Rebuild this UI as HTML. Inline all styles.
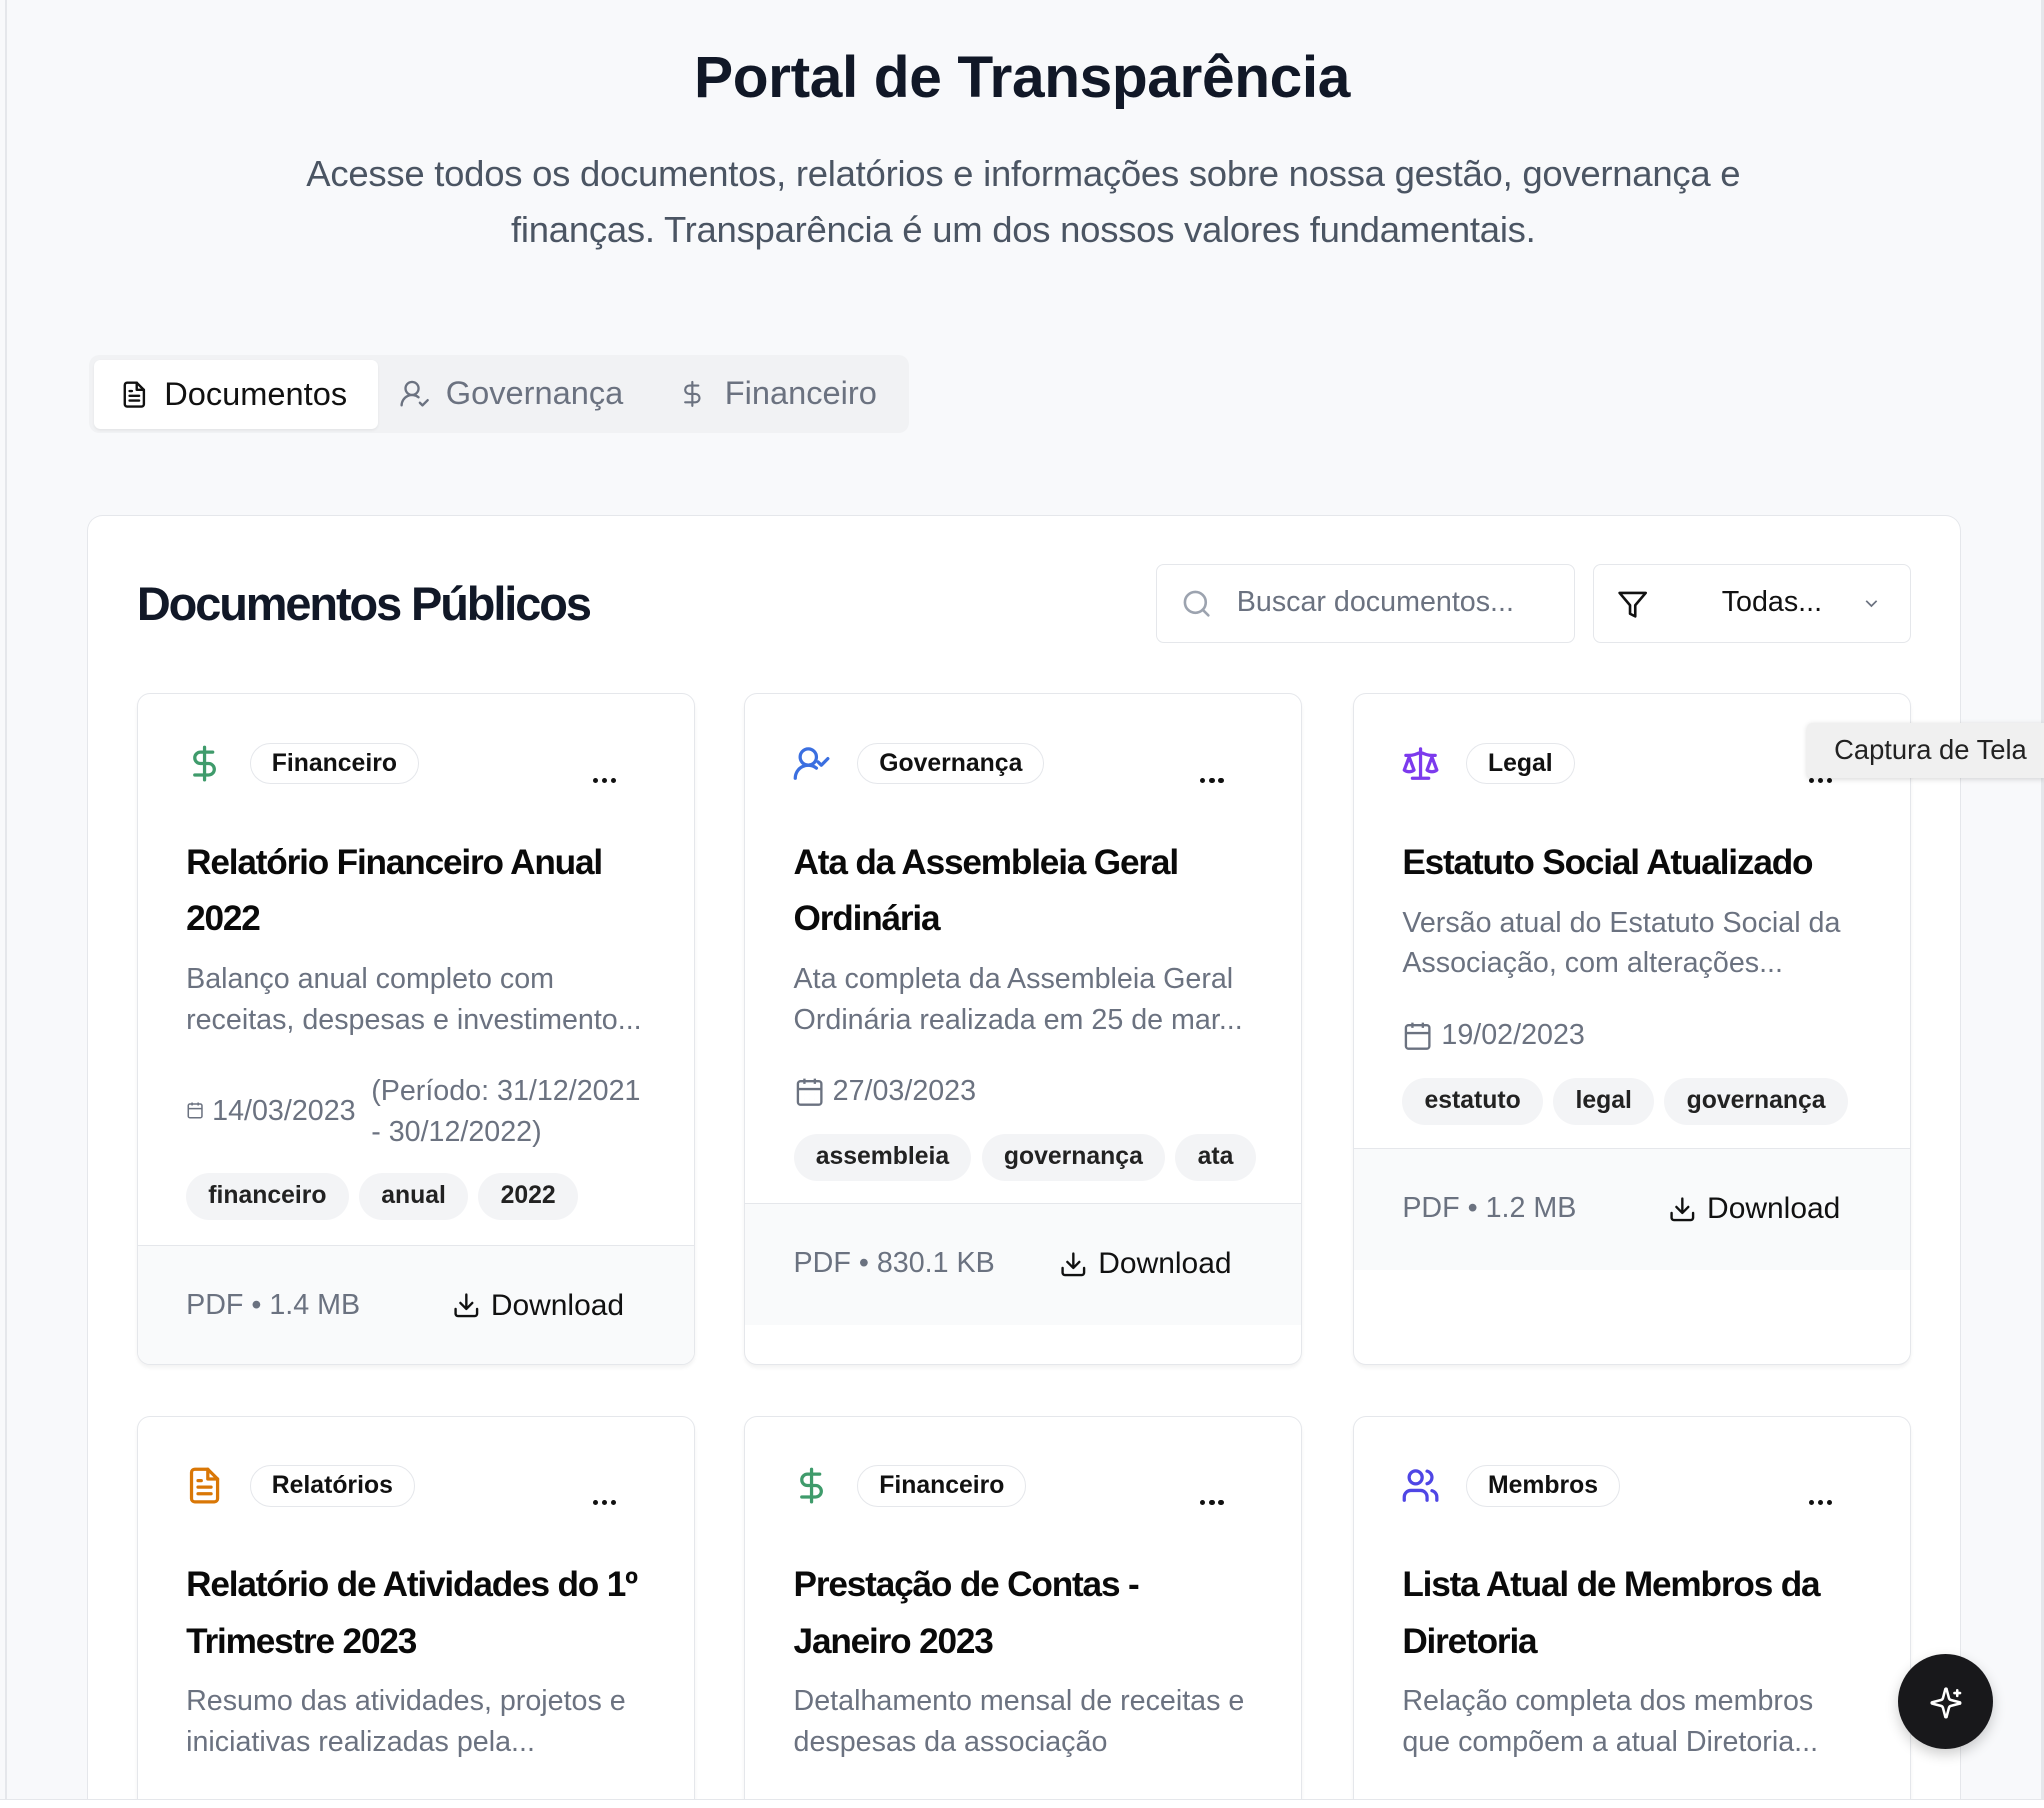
<!DOCTYPE html>
<html><head><meta charset="utf-8">
<style>
html,body{margin:0;padding:0;width:2044px;height:1808px;overflow:hidden;background:#f8f9fb;}
#w{width:1568px;height:1387px;zoom:1.30357;background:#f8f9fb;font-family:"Liberation Sans",Arial,sans-serif;color:#111827;position:relative;overflow:hidden;}
.abs{position:absolute;}
.nw{white-space:nowrap;}
h1{position:absolute;left:0;width:1568px;top:30px;margin:0;text-align:center;font-size:45px;font-weight:700;letter-spacing:-0.3px;color:#111827;line-height:60px;}
.sub{position:absolute;left:0;width:1570px;top:112px;text-align:center;font-size:28px;line-height:43px;color:#4b5563;letter-spacing:-0.2px;}
.tabs{left:68px;top:272px;width:629px;height:60px;background:#f1f2f4;border-radius:8px;}
.tab{position:absolute;top:0;height:60px;display:flex;align-items:center;font-size:25px;color:#6b7280;}
.tab.active{left:4px;top:4px;height:53px;width:218px;background:#fff;border-radius:5px;color:#111;box-shadow:0 1px 2px rgba(0,0,0,.06);}
.panel{left:67px;top:395px;width:1437px;height:992px;background:#fff;border:1px solid #e5e7eb;border-bottom:none;border-radius:12px 12px 0 0;box-sizing:border-box;}
.ptitle{left:105px;top:442px;font-size:36px;font-weight:700;letter-spacing:-1.6px;line-height:44px;}
.search{left:887px;top:433px;width:321px;height:60px;border:1.5px solid #e5e7eb;border-radius:6px;box-sizing:border-box;}
.card{position:absolute;width:428px;height:515px;background:#fff;border:1.5px solid #e5e7eb;border-radius:10px;box-sizing:border-box;overflow:hidden;box-shadow:0 2px 3px rgba(0,0,0,.05);}
.card.r2{height:301px;border-bottom:none;border-radius:10px 10px 0 0;}
.card>*{position:absolute;}
.ico{left:36px;top:38px;width:30px;height:30px;}
.badge{left:86px;top:37px;height:32px;padding:0 16px;border:1.5px solid #e5e7eb;border-radius:16px;font-size:19px;font-weight:700;line-height:30px;box-sizing:border-box;color:#111;}
.dots{left:349px;top:64px;display:flex;gap:3px;}
.dots i{width:4px;height:4px;background:#111;border-radius:50%;display:block;}
.ttl{left:37px;top:108px;font-size:27px;font-weight:700;line-height:43px;letter-spacing:-0.9px;white-space:nowrap;color:#0a0a0a;}
.desc{left:37px;top:203px;font-size:22px;line-height:31px;color:#6b7280;white-space:nowrap;}
.date{left:37px;font-size:22px;line-height:31px;color:#6b7280;display:flex;align-items:center;gap:6px;white-space:nowrap;}
.tags{left:37px;display:flex;gap:8px;}
.tags span{height:36px;line-height:36px;padding:0 17px;background:#f3f4f6;border-radius:18px;font-size:19px;font-weight:700;color:#222;}
.foot{left:0;width:428px;height:93px;background:#f9fafb;border-top:1.5px solid #e5e7eb;}
.meta{position:absolute;left:37px;top:0;line-height:92px;font-size:22px;color:#6b7280;}
.dl{position:absolute;right:55px;top:0;line-height:92px;font-size:23px;color:#111;display:flex;align-items:center;gap:8px;}
</style></head><body><div id="w">
<div class="abs" style="left:4px;top:0;width:1px;height:1380px;background:#e5e7eb"></div>
<div class="abs" style="left:1566px;top:0;width:2px;height:1380px;background:#e5e7eb"></div>

<h1>Portal de Transparência</h1>
<div class="sub">Acesse todos os documentos, relatórios e informações sobre nossa gestão, governança e<br>finanças. Transparência é um dos nossos valores fundamentais.</div>

<div class="abs tabs">
 <div class="tab active"><svg style="margin:0 12px 0 20px" width="22" height="24" viewBox="0 0 24 24" fill="none" stroke="#111" stroke-width="2" stroke-linecap="round" stroke-linejoin="round"><path d="M14 2H6a2 2 0 0 0-2 2v16a2 2 0 0 0 2 2h12a2 2 0 0 0 2-2V8z"/><path d="M14 2v6h6M16 13H8M16 17H8M10 9H8"/></svg>Documentos</div>
 <div class="tab" style="left:238px"><svg style="margin-right:12px" width="24" height="24" viewBox="0 0 24 24" fill="none" stroke="#6b7280" stroke-width="1.8" stroke-linecap="round" stroke-linejoin="round"><path d="M2 21a8 8 0 0 1 13-6.2"/><circle cx="10" cy="8" r="5"/><path d="m16 19 2 2 4-4"/></svg>Governança</div>
 <div class="tab" style="left:452px"><svg style="margin-right:14px" width="22" height="26" viewBox="0 0 24 24" fill="none" stroke="#6b7280" stroke-width="1.8" stroke-linecap="round"><path d="M12 2v20M17 5H9.5a3.5 3.5 0 0 0 0 7h5a3.5 3.5 0 0 1 0 7H6"/></svg>Financeiro</div>
</div>

<div class="abs panel"></div>
<div class="abs ptitle nw">Documentos Públicos</div>
<div class="abs search"><svg class="abs" style="left:18px;top:17px" width="24" height="24" viewBox="0 0 24 24" fill="none" stroke="#9ca3af" stroke-width="2" stroke-linecap="round"><circle cx="11" cy="11" r="8"/><path d="m21 21-4.3-4.3"/></svg><div class="abs nw" style="left:61px;top:0;line-height:57px;font-size:22px;color:#6b7280">Buscar documentos...</div></div>
<div class="abs search" style="left:1222px;width:244px"><svg class="abs" style="left:18px;top:18px" width="24" height="24" viewBox="0 0 24 24" fill="none" stroke="#111" stroke-width="2" stroke-linejoin="round"><path d="M22 3H2l8 9.46V19l4 2v-8.54z"/></svg><div class="abs nw" style="left:98px;line-height:57px;font-size:22px;color:#111">Todas...</div><svg class="abs" style="left:205px;top:21px" width="16" height="16" viewBox="0 0 24 24" fill="none" stroke="#6b7280" stroke-width="2"><path d="m6 9 6 6 6-6"/></svg></div>

<!-- Row 1 -->
<div class="card" style="left:105px;top:532px">
 <svg class="ico" viewBox="0 0 24 24" fill="none" stroke="#3f9b6b" stroke-width="2" stroke-linecap="round"><path d="M12 2v20M17 5H9.5a3.5 3.5 0 0 0 0 7h5a3.5 3.5 0 0 1 0 7H6"/></svg>
 <div class="badge">Financeiro</div>
 <div class="dots"><i></i><i></i><i></i></div>
 <div class="ttl">Relatório Financeiro Anual<br>2022</div>
 <div class="desc">Balanço anual completo com<br>receitas, despesas e investimento...</div>
 <svg style="left:37px;top:312px" width="14" height="14" viewBox="0 0 24 24" fill="none" stroke="#6b7280" stroke-width="2"><rect x="3" y="4" width="18" height="18" rx="2"/><path d="M16 2v4M8 2v4M3 10h18"/></svg>
 <div class="desc" style="left:57px;top:304px;color:#6b7280">14/03/2023</div>
 <div class="desc" style="left:179px;top:289px">(Período: 31/12/2021<br>- 30/12/2022)</div>
 <div class="tags" style="top:367px"><span>financeiro</span><span>anual</span><span>2022</span></div>
 <div class="foot" style="top:422px"><div class="meta">PDF • 1.4 MB</div><div class="dl"><svg width="22" height="22" viewBox="0 0 24 24" fill="none" stroke="#111" stroke-width="2" stroke-linecap="round" stroke-linejoin="round"><path d="M21 15v4a2 2 0 0 1-2 2H5a2 2 0 0 1-2-2v-4M7 10l5 5 5-5M12 15V3"/></svg>Download</div></div>
</div>

<div class="card" style="left:571px;top:532px">
 <svg class="ico" viewBox="0 0 24 24" fill="none" stroke="#3b6fe0" stroke-width="2" stroke-linecap="round" stroke-linejoin="round"><path d="M2 21a8 8 0 0 1 13-6.2"/><circle cx="10" cy="8" r="5"/><path d="m16 11 2 2 4-4"/></svg>
 <div class="badge">Governança</div>
 <div class="dots"><i></i><i></i><i></i></div>
 <div class="ttl">Ata da Assembleia Geral<br>Ordinária</div>
 <div class="desc">Ata completa da Assembleia Geral<br>Ordinária realizada em 25 de mar...</div>
 <div class="date" style="top:289px"><svg width="24" height="24" viewBox="0 0 24 24" fill="none" stroke="#6b7280" stroke-width="1.8"><rect x="3" y="4" width="18" height="18" rx="2"/><path d="M16 2v4M8 2v4M3 10h18M8 14h.01M12 14h.01M16 14h.01M8 18h.01M12 18h.01M16 18h.01"/></svg>27/03/2023</div>
 <div class="tags" style="top:337px"><span>assembleia</span><span>governança</span><span>ata</span></div>
 <div class="foot" style="top:390px"><div class="meta">PDF • 830.1 KB</div><div class="dl"><svg width="22" height="22" viewBox="0 0 24 24" fill="none" stroke="#111" stroke-width="2" stroke-linecap="round" stroke-linejoin="round"><path d="M21 15v4a2 2 0 0 1-2 2H5a2 2 0 0 1-2-2v-4M7 10l5 5 5-5M12 15V3"/></svg>Download</div></div>
</div>

<div class="card" style="left:1038px;top:532px">
 <svg class="ico" viewBox="0 0 24 24" fill="none" stroke="#7c3aed" stroke-width="2" stroke-linecap="round" stroke-linejoin="round"><path d="m16 16 3-8 3 8c-.9.7-1.9 1-3 1s-2.1-.3-3-1zM2 16l3-8 3 8c-.9.7-1.9 1-3 1s-2.1-.3-3-1zM7 21h10M12 3v18M3 7h2c2 0 5-1 7-2 2 1 5 2 7 2h2"/></svg>
 <div class="badge">Legal</div>
 <div class="dots"><i></i><i></i><i></i></div>
 <div class="ttl">Estatuto Social Atualizado</div>
 <div class="desc" style="top:160px">Versão atual do Estatuto Social da<br>Associação, com alterações...</div>
 <div class="date" style="top:246px"><svg width="24" height="24" viewBox="0 0 24 24" fill="none" stroke="#6b7280" stroke-width="1.8"><rect x="3" y="4" width="18" height="18" rx="2"/><path d="M16 2v4M8 2v4M3 10h18M8 14h.01M12 14h.01M16 14h.01M8 18h.01M12 18h.01M16 18h.01"/></svg>19/02/2023</div>
 <div class="tags" style="top:294px"><span>estatuto</span><span>legal</span><span>governança</span></div>
 <div class="foot" style="top:348px"><div class="meta">PDF • 1.2 MB</div><div class="dl"><svg width="22" height="22" viewBox="0 0 24 24" fill="none" stroke="#111" stroke-width="2" stroke-linecap="round" stroke-linejoin="round"><path d="M21 15v4a2 2 0 0 1-2 2H5a2 2 0 0 1-2-2v-4M7 10l5 5 5-5M12 15V3"/></svg>Download</div></div>
</div>

<!-- Row 2 -->
<div class="card r2" style="left:105px;top:1086px">
 <svg class="ico" viewBox="0 0 24 24" fill="none" stroke="#d97706" stroke-width="2" stroke-linecap="round" stroke-linejoin="round"><path d="M14 2H6a2 2 0 0 0-2 2v16a2 2 0 0 0 2 2h12a2 2 0 0 0 2-2V8z"/><path d="M14 2v6h6M16 13H8M16 17H8M10 9H8"/></svg>
 <div class="badge">Relatórios</div>
 <div class="dots"><i></i><i></i><i></i></div>
 <div class="ttl">Relatório de Atividades do 1º<br>Trimestre 2023</div>
 <div class="desc">Resumo das atividades, projetos e<br>iniciativas realizadas pela...</div>
</div>
<div class="card r2" style="left:571px;top:1086px">
 <svg class="ico" viewBox="0 0 24 24" fill="none" stroke="#3f9b6b" stroke-width="2" stroke-linecap="round"><path d="M12 2v20M17 5H9.5a3.5 3.5 0 0 0 0 7h5a3.5 3.5 0 0 1 0 7H6"/></svg>
 <div class="badge">Financeiro</div>
 <div class="dots"><i></i><i></i><i></i></div>
 <div class="ttl">Prestação de Contas -<br>Janeiro 2023</div>
 <div class="desc">Detalhamento mensal de receitas e<br>despesas da associação</div>
</div>
<div class="card r2" style="left:1038px;top:1086px">
 <svg class="ico" viewBox="0 0 24 24" fill="none" stroke="#4f46e5" stroke-width="2" stroke-linecap="round" stroke-linejoin="round"><path d="M16 21v-2a4 4 0 0 0-4-4H6a4 4 0 0 0-4 4v2"/><circle cx="9" cy="7" r="4"/><path d="M22 21v-2a4 4 0 0 0-3-3.87M16 3.13a4 4 0 0 1 0 7.75"/></svg>
 <div class="badge">Membros</div>
 <div class="dots"><i></i><i></i><i></i></div>
 <div class="ttl">Lista Atual de Membros da<br>Diretoria</div>
 <div class="desc">Relação completa dos membros<br>que compõem a atual Diretoria...</div>
</div>

<div class="abs" style="left:0;top:1380px;width:1568px;height:7px;background:#fff;border-top:1.5px solid #e5e7eb;box-sizing:border-box"></div>

<div class="abs nw" style="left:1386px;top:555px;width:182px;height:42px;background:#f0f0f0;box-shadow:0 1px 4px rgba(0,0,0,.15);border-radius:4px 0 0 4px;font-size:21px;line-height:42px;padding-left:21px;box-sizing:border-box;color:#222">Captura de Tela</div>

<div class="abs" style="left:1456px;top:1269px;width:73px;height:73px;border-radius:50%;background:#18181b;box-shadow:0 4px 10px rgba(0,0,0,.2)"><svg class="abs" style="left:24px;top:24px" width="26" height="26" viewBox="0 0 24 24" fill="none" stroke="#fff" stroke-width="1.8" stroke-linejoin="round" stroke-linecap="round"><path d="M9.9 15.5a2 2 0 0 0-1.4-1.4L2.4 12.5a.5.5 0 0 1 0-1l6.1-1.6a2 2 0 0 0 1.4-1.4l1.6-6.1a.5.5 0 0 1 1 0l1.6 6.1a2 2 0 0 0 1.4 1.4l6.1 1.6a.5.5 0 0 1 0 1l-6.1 1.6a2 2 0 0 0-1.4 1.4l-1.6 6.1a.5.5 0 0 1-1 0z"/><path d="M20 3v4M22 5h-4"/></svg></div>
</div></body></html>
